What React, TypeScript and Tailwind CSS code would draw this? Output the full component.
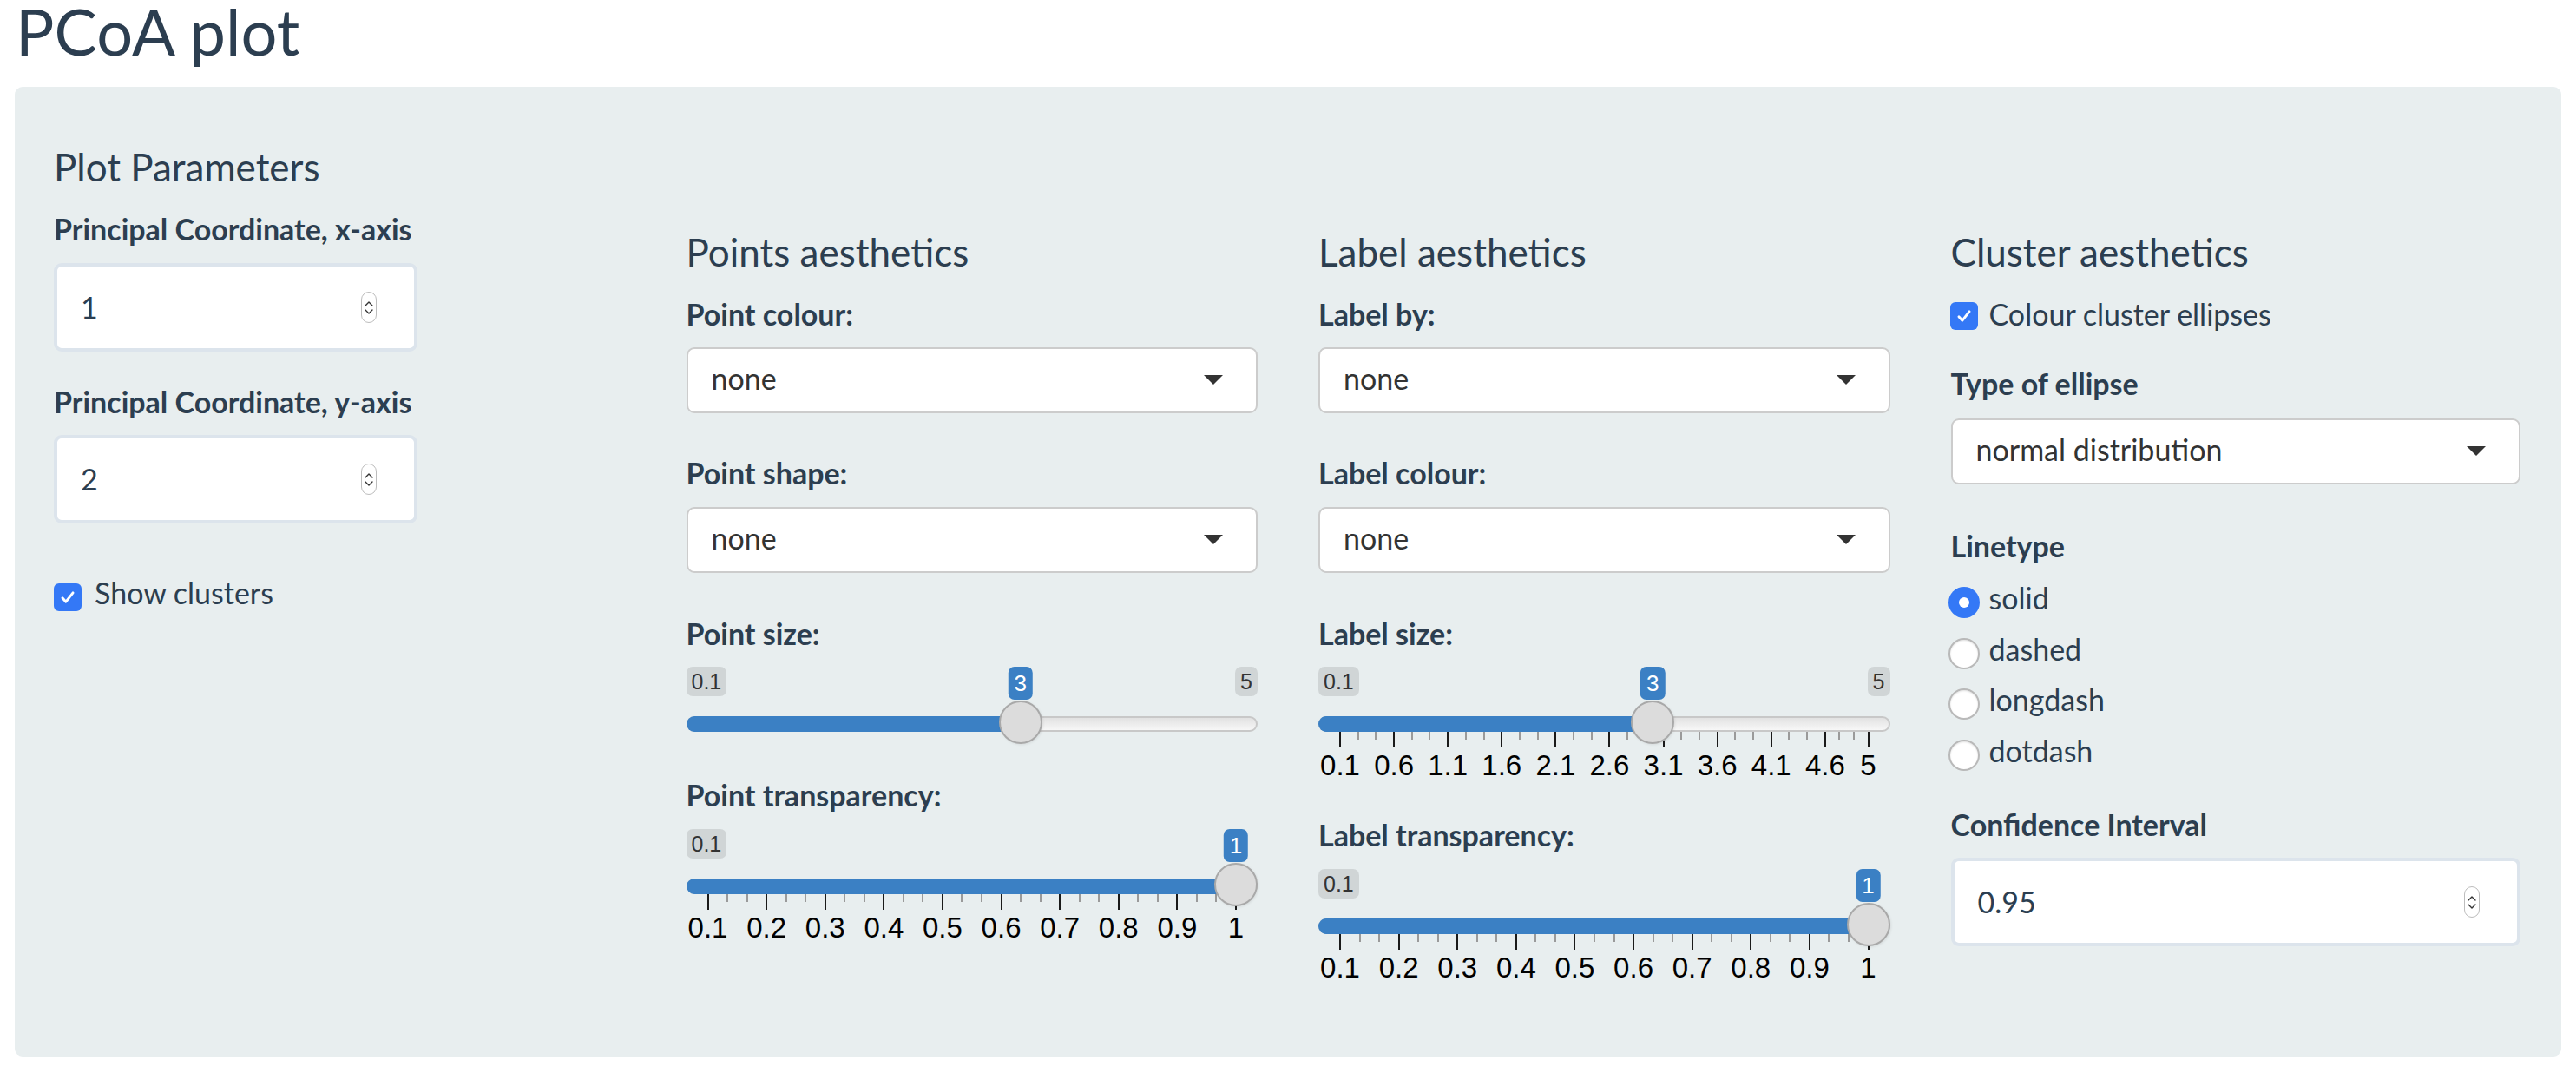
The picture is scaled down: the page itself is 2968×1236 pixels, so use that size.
import React from 'react';

const label = "block h-[40px] text-[34px] font-bold leading-[40px] text-[#2c3e50]";
const heading = "block h-[43px] text-[44px] leading-[43px] text-[#2c3e50]";

const fmt = (v: number) => (Math.round(v * 10) / 10).toString();

type SliderProps = {
  min: number;
  max: number;
  value: number;
  grid?: number[];
};

const Slider: React.FC<SliderProps> = ({ min, max, value, grid }) => {
  const frac = (v: number) => (v - min) / (max - min);
  const at = (v: number) => `calc(25px + ${frac(v)} * (100% - 50px))`;
  const minors: number[] = [];
  if (grid) {
    for (let i = 0; i < grid.length - 1; i++) {
      const a = grid[i];
      const b = grid[i + 1];
      minors.push(a + (b - a) / 3, a + (2 * (b - a)) / 3);
    }
  }
  const showMax = frac(value) < 0.9;

  return (
    <div className={`relative w-full font-['Liberation_Sans',Arial,sans-serif] ${grid ? 'h-[135px]' : 'h-[90px]'}`}>
      <span className="absolute left-0 top-0 h-[34px] rounded-[7px] bg-black/10 px-[6px] text-[25px] leading-[34px] text-[#333]">
        {fmt(min)}
      </span>
      {showMax && (
        <span className="absolute right-0 top-0 h-[34px] rounded-[7px] bg-black/10 px-[6px] text-[25px] leading-[34px] text-[#333]">
          {fmt(max)}
        </span>
      )}

      <div className="absolute left-0 right-0 top-[57px] h-[18px] rounded-full border-2 border-[#c8c8c8] bg-linear-to-b from-[#e2e2e2] to-[#f7f7f7]" />
      <div
        className="absolute left-0 top-[57px] h-[18px] rounded-l-full bg-[#3b80c4]"
        style={{ width: at(value) }}
      />

      {grid &&
        minors.map((v, i) => (
          <span
            key={`m${i}`}
            className="absolute top-[75px] h-[9px] w-[2px] -translate-x-1/2 bg-[#9a9a9a]"
            style={{ left: at(v) }}
          />
        ))}
      {grid &&
        grid.map((v) => (
          <React.Fragment key={v}>
            <span
              className="absolute top-[75px] h-[18px] w-[2px] -translate-x-1/2 bg-[#1a1a1a]"
              style={{ left: at(v) }}
            />
            <span
              className="absolute top-[99px] -translate-x-1/2 text-[33px] leading-[30px] text-black"
              style={{ left: at(v) }}
            >
              {fmt(v)}
            </span>
          </React.Fragment>
        ))}

      <span
        className="absolute top-[39px] h-[50px] w-[50px] -translate-x-1/2 rounded-full border-2 border-[#a9a9a9] bg-[#dcdcdc] shadow-[1px_1px_3px_rgba(0,0,0,0.08)]"
        style={{ left: at(value) }}
      />
      <span
        className="absolute top-0 h-[38px] -translate-x-1/2 rounded-[7px] bg-[#3b80c4] px-[7px] text-[26px] leading-[38px] text-white"
        style={{ left: at(value) }}
      >
        {fmt(value)}
      </span>
    </div>
  );
};

const Select: React.FC<{ value: string; className?: string }> = ({ value, className = '' }) => (
  <div
    className={`relative h-[76px] w-full rounded-[9px] border-2 border-[#cccccc] bg-white pl-[27px] text-[34px] leading-[68px] text-[#333] ${className}`}
  >
    {value}
    <span className="absolute right-[38px] top-[30px] h-0 w-0 border-x-[11px] border-t-[11px] border-x-transparent border-t-[#333]" />
  </div>
);

const NumberBox: React.FC<{ value: string; className?: string }> = ({ value, className = '' }) => (
  <div
    className={`relative h-[102px] rounded-[9px] border-4 border-[#dce4ec] bg-white pl-[27px] text-[34px] leading-[94px] text-[#2c3e50] ${className}`}
  >
    {value}
    <span className="absolute right-[43px] top-1/2 flex h-[36px] w-[18px] -translate-y-1/2 flex-col items-center justify-center gap-[3px] rounded-[9px] border border-[#bdbdbd] bg-white">
      <svg viewBox="0 0 10 6" className="h-[6px] w-[10px]">
        <path d="M1 5l4-4 4 4" fill="none" stroke="#333" strokeWidth="1.4" strokeLinecap="round" strokeLinejoin="round" />
      </svg>
      <svg viewBox="0 0 10 6" className="h-[6px] w-[10px]">
        <path d="M1 1l4 4 4-4" fill="none" stroke="#333" strokeWidth="1.4" strokeLinecap="round" strokeLinejoin="round" />
      </svg>
    </span>
  </div>
);

const Checkbox: React.FC<{ text: string; boxTop: string; gap: string }> = ({ text, boxTop, gap }) => (
  <div className={`flex h-[40px] items-start ${gap}`}>
    <span className={`flex h-[32px] w-[32px] items-center justify-center rounded-[6px] bg-[#3478f6] ${boxTop}`}>
      <svg viewBox="0 0 16 16" className="h-[22px] w-[22px]">
        <path d="M3.6 8.6l2.9 3.2 5.9-7.6" fill="none" stroke="white" strokeWidth="2.1" strokeLinecap="round" strokeLinejoin="round" />
      </svg>
    </span>
    <span className="text-[34px] leading-[40px] text-[#2c3e50]">{text}</span>
  </div>
);

const Radio: React.FC<{ text: string; checked?: boolean; className?: string }> = ({ text, checked, className = '' }) => (
  <div className={`flex h-[40px] items-start gap-[11px] ${className}`}>
    {checked ? (
      <span className="mt-[7px] flex h-[36px] w-[36px] items-center justify-center rounded-full bg-[#3478f6]">
        <span className="h-[12px] w-[12px] rounded-full bg-white" />
      </span>
    ) : (
      <span className="mt-[7px] h-[36px] w-[36px] rounded-full border-2 border-[#b9b9b9] bg-white shadow-[inset_0_1px_2px_rgba(0,0,0,0.12)]" />
    )}
    <span className="text-[34px] leading-[40px] text-[#2c3e50]">{text}</span>
  </div>
);

const sizeGrid = [0.1, 0.6, 1.1, 1.6, 2.1, 2.6, 3.1, 3.6, 4.1, 4.6, 5];
const alphaGrid = [0.1, 0.2, 0.3, 0.4, 0.5, 0.6, 0.7, 0.8, 0.9, 1];

const App: React.FC = () => {
  return (
    <div className="min-h-screen w-full bg-white px-[17px] font-['Lato',sans-serif]">
      <h2 className="h-[72px] pl-[1px] text-[74px] font-normal leading-[71px] text-[#2c3e50]">PCoA plot</h2>

      <div className="mt-[28px] h-[1117px] rounded-[9px] bg-[#e8eeef] px-[45px] pt-[71px]">
        <div className="grid grid-cols-4 gap-x-[70px]">
          {/* plot parameters */}
          <div className="flex flex-col items-start">
            <span className={heading}>Plot Parameters</span>
            <span className={`${label} mt-[30px]`}>Principal Coordinate, x-axis</span>
            <NumberBox value="1" className="mt-[19px] w-[419px]" />
            <span className={`${label} mt-[38px]`}>Principal Coordinate, y-axis</span>
            <NumberBox value="2" className="mt-[18px] w-[419px]" />
            <div className="mt-[60px]">
              <Checkbox text="Show clusters" boxTop="mt-[9px]" gap="gap-[15px]" />
            </div>
          </div>

          {/* points */}
          <div className="mt-[98px] flex flex-col">
            <span className={heading}>Points aesthetics</span>
            <span className={`${label} mt-[30px]`}>Point colour:</span>
            <Select value="none" className="mt-[18px]" />
            <span className={`${label} mt-[49px]`}>Point shape:</span>
            <Select value="none" className="mt-[19px]" />
            <span className={`${label} mt-[50px]`}>Point size:</span>
            <div className="mt-[18px]">
              <Slider min={0.1} max={5} value={3} />
            </div>
            <span className={`${label} mt-[38px]`}>Point transparency:</span>
            <div className="mt-[19px]">
              <Slider min={0.1} max={1} value={1} grid={alphaGrid} />
            </div>
          </div>

          {/* labels */}
          <div className="mt-[98px] flex flex-col">
            <span className={heading}>Label aesthetics</span>
            <span className={`${label} mt-[30px]`}>Label by:</span>
            <Select value="none" className="mt-[18px]" />
            <span className={`${label} mt-[49px]`}>Label colour:</span>
            <Select value="none" className="mt-[19px]" />
            <span className={`${label} mt-[50px]`}>Label size:</span>
            <div className="mt-[18px]">
              <Slider min={0.1} max={5} value={3} grid={sizeGrid} />
            </div>
            <span className={`${label} mt-[39px]`}>Label transparency:</span>
            <div className="mt-[19px]">
              <Slider min={0.1} max={1} value={1} grid={alphaGrid} />
            </div>
          </div>

          {/* clusters */}
          <div className="mt-[98px] flex flex-col pr-[2px]">
            <span className={heading}>Cluster aesthetics</span>
            <div className="mt-[30px] -ml-[1px]">
              <Checkbox text="Colour cluster ellipses" boxTop="mt-[6px]" gap="gap-[13px]" />
            </div>
            <span className={`${label} mt-[40px]`}>Type of ellipse</span>
            <Select value="normal distribution" className="mt-[20px]" />
            <span className={`${label} mt-[51px]`}>Linetype</span>
            <div className="-ml-[3px] flex flex-col">
              <Radio text="solid" checked className="mt-[20px]" />
              <Radio text="dashed" className="mt-[18.7px]" />
              <Radio text="longdash" className="mt-[18.7px]" />
              <Radio text="dotdash" className="mt-[18.7px]" />
            </div>
            <span className={`${label} mt-[45px]`}>Confidence Interval</span>
            <NumberBox value="0.95" className="mt-[18px] w-full" />
          </div>
        </div>
      </div>
    </div>
  );
};

export default App;
